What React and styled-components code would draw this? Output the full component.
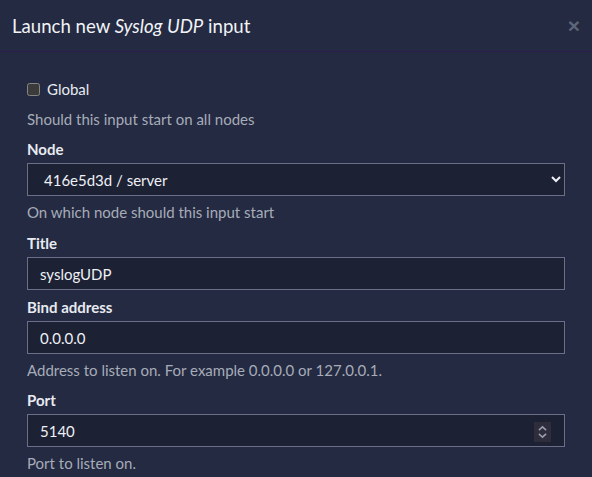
import React from 'react';
import styled, { createGlobalStyle } from 'styled-components';

const Global = createGlobalStyle`
    html, body {
        margin: 0;
        padding: 0;
        background: #232a42;
    }
    body {
        font-family: Lato, "Open Sans", sans-serif;
        font-size: 15px;
        color: #e8eaf0;
    }
`

const Modal = styled.div`
    width: 592px;
    height: 477px;
    overflow: hidden;
    background: #232a42;
`
const Header = styled.div`
    height: 52px;
    display: flex;
    align-items: center;
    justify-content: space-between;
    padding: 0 12px;
    border-bottom: 1px solid #2a1d4d;
    box-sizing: border-box;
`
const Heading = styled.h4`
    margin: 0;
    font-size: 18.6px;
    font-weight: 400;
    color: #f2f3f7;
    em {
        font-style: italic;
    }
`
const Close = styled.button`
    border: none;
    background: none;
    color: #5d6579;
    font-size: 21px;
    font-weight: bold;
    padding: 0;
    line-height: 1;
    cursor: pointer;
`
const Body = styled.div`
    padding: 28px 27px 0;
    display: flex;
    flex-direction: column;
`
const CheckRow = styled.label`
    display: flex;
    align-items: center;
    gap: 7px;
    height: 18px;
    input {
        margin: 0;
        width: 13px;
        height: 13px;
        color-scheme: dark;
    }
`
const Help = styled.div`
    color: #a7acb8;
    margin-top: ${p => p.$top ?? 6}px;
    line-height: 20px;
`
const Label = styled.label`
    display: block;
    font-weight: 700;
    margin-top: ${p => p.$top ?? 10}px;
    line-height: 20px;
`
const fieldCss = `
    display: block;
    width: 100%;
    box-sizing: border-box;
    height: 33px;
    background: #1d2134;
    border: 1px solid #6c6d88;
    border-radius: 0;
    color: #eef0f5;
    font-family: inherit;
    font-size: 15px;
    padding: 0 12px;
    color-scheme: dark;
    outline: none;
`
const Select = styled.select`
    ${fieldCss}
    margin-top: 4px;
`
const Input = styled.input`
    ${fieldCss}
    margin-top: 4px;
`
const NumberWrap = styled.div`
    position: relative;
    margin-top: 4px;
    input {
        ${fieldCss}
        -moz-appearance: textfield;
    }
    input::-webkit-inner-spin-button,
    input::-webkit-outer-spin-button {
        -webkit-appearance: none;
        margin: 0;
    }
`
const Spinner = styled.div`
    position: absolute;
    right: 14px;
    top: 8px;
    width: 17px;
    height: 20px;
    background: #2d2d3b;
    display: flex;
    align-items: center;
    justify-content: center;
`

const NumberInput = ({ value }) => (
    <NumberWrap>
        <input type="number" defaultValue={value} />
        <Spinner>
            <svg width="9" height="14" viewBox="0 0 9 14" fill="none" stroke="#9c9cb0" strokeWidth="1.6" strokeLinecap="square">
                <path d="M1.5 4.5 L4.5 1.8 L7.5 4.5" />
                <path d="M1.5 9.5 L4.5 12.2 L7.5 9.5" />
            </svg>
        </Spinner>
    </NumberWrap>
)

const App = () => {
    return (
        <Modal>
            <Global />
            <Header>
                <Heading>Launch new <em>Syslog UDP</em> input</Heading>
                <Close>×</Close>
            </Header>
            <Body>
                <CheckRow>
                    <input type="checkbox" />
                    Global
                </CheckRow>
                <Help $top={11}>Should this input start on all nodes</Help>
                <Label>Node</Label>
                <Select defaultValue="416e5d3d">
                    <option value="416e5d3d">416e5d3d / server</option>
                </Select>
                <Help>On which node should this input start</Help>
                <Label $top={11}>Title</Label>
                <Input type="text" defaultValue="syslogUDP" />
                <Label $top={7}>Bind address</Label>
                <Input type="text" defaultValue="0.0.0.0" />
                <Help>Address to listen on. For example 0.0.0.0 or 127.0.0.1.</Help>
                <Label>Port</Label>
                <NumberInput value={5140} />
                <Help>Port to listen on.</Help>
            </Body>
        </Modal>
    );
};

export default App;
